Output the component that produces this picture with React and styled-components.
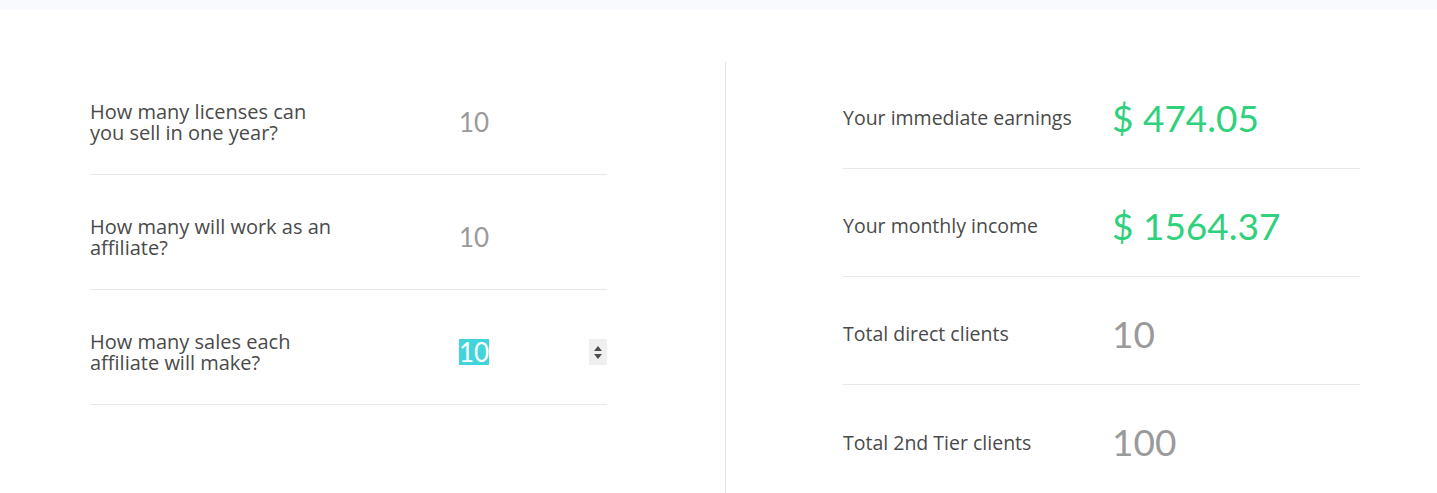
import React, { useEffect, useRef } from 'react';
import styled, { createGlobalStyle } from 'styled-components';

const GlobalStyle = createGlobalStyle`
  html, body {
    margin: 0;
    padding: 0;
    background: #ffffff;
    overflow: hidden;
    font-family: "Lato", "Open Sans", sans-serif;
  }
`;

const TopBar = styled.div`
  height: 10px;
  background: #f9fafe;
`;

const Calculator = styled.section`
  display: grid;
  grid-template-columns: 725px 1fr;
  padding-top: 50px;
  min-height: 483px;
  box-sizing: border-box;
`;

const LeftColumn = styled.div`
  padding-left: 90px;
`;

const RightColumn = styled.div`
  border-left: 1px solid #e3e3e3;
  margin-top: 2px;
  padding-left: 117px;
`;

const List = styled.div`
  width: 517px;
  margin-top: ${(p) => p.offset || 0}px;
`;

const InputRow = styled.div`
  display: grid;
  grid-template-columns: 365px 1fr;
  align-items: center;
  height: 115px;
  padding-top: 10px;
  box-sizing: border-box;
  border-bottom: 1px solid #e8e8e8;
`;

const Label = styled.label`
  font-family: "Open Sans", sans-serif;
  font-size: 20px;
  line-height: 21px;
  color: #4a4a4a;
`;

const InputWrap = styled.div`
  display: flex;
  align-items: center;
  justify-content: space-between;
`;

const NumberInput = styled.input`
  width: 120px;
  border: none;
  outline: none;
  padding: 0 0 0 4px;
  font-family: inherit;
  font-size: 26px;
  line-height: 26px;
  height: 26px;
  color: #9a9a9a;
  background: transparent;

  &::selection {
    background: #42d4db;
    color: #ffffff;
  }
`;

const Spinner = styled.span`
  display: flex;
  flex-direction: column;
  align-items: center;
  justify-content: center;
  gap: 3px;
  width: 18px;
  height: 26px;
  background: #efefef;
`;

const ResultRow = styled.div`
  display: grid;
  grid-template-columns: 269px 1fr;
  align-items: center;
  height: 108px;
  padding-top: 6px;
  box-sizing: border-box;
  border-bottom: ${(p) => (p.last ? 'none' : '1px solid #e8e8e8')};
`;

const ResultLabel = styled.span`
  font-family: "Open Sans", sans-serif;
  font-size: 19.5px;
  color: #4a4a4a;
`;

const ResultValue = styled.span`
  font-size: 37px;
  line-height: 40px;
  color: ${(p) => (p.money ? '#2fd17c' : '#9a9a9a')};
`;

const Arrow = ({ up }) => (
  <svg width="8" height="5" viewBox="0 0 8 5">
    <path d={up ? 'M0 5 L4 0 L8 5 Z' : 'M0 0 L4 5 L8 0 Z'} fill="#4d4d4d" />
  </svg>
);

const questions = [
  ['How many licenses can', 'you sell in one year?'],
  ['How many will work as an', 'affiliate?'],
  ['How many sales each', 'affiliate will make?'],
];

const results = [
  { label: 'Your immediate earnings', value: '$ 474.05', money: true },
  { label: 'Your monthly income', value: '$ 1564.37', money: true },
  { label: 'Total direct clients', value: '10' },
  { label: 'Total 2nd Tier clients', value: '100' },
];

const App = () => {
  const activeRef = useRef(null);

  useEffect(() => {
    if (activeRef.current) {
      activeRef.current.focus();
      activeRef.current.select();
    }
  }, []);

  return (
    <>
      <GlobalStyle />
      <TopBar />
      <Calculator>
        <LeftColumn>
          <List>
            {questions.map((q, i) => (
              <InputRow key={i}>
                <Label>
                  {q[0]}
                  <br />
                  {q[1]}
                </Label>
                <InputWrap>
                  <NumberInput
                    type="text"
                    defaultValue="10"
                    ref={i === 2 ? activeRef : null}
                  />
                  {i === 2 && (
                    <Spinner>
                      <Arrow up />
                      <Arrow />
                    </Spinner>
                  )}
                </InputWrap>
              </InputRow>
            ))}
          </List>
        </LeftColumn>
        <RightColumn>
          <List offset={-1}>
            {results.map((r, i) => (
              <ResultRow key={r.label} last={i === results.length - 1}>
                <ResultLabel>{r.label}</ResultLabel>
                <ResultValue money={r.money}>{r.value}</ResultValue>
              </ResultRow>
            ))}
          </List>
        </RightColumn>
      </Calculator>
    </>
  );
};

export default App;
